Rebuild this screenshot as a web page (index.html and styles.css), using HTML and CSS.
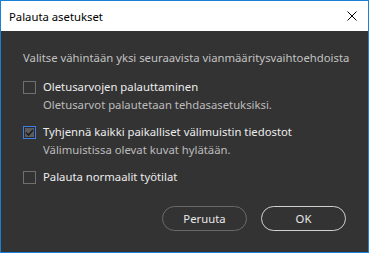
FILE: index.html
```html
<!DOCTYPE html>
<html lang="fi">
<head>
    <meta charset="UTF-8">
    <title>Palauta asetukset</title>
    <link rel="stylesheet" href="styles.css">
</head>
<body>
    <div class="dialog">
        <div class="title-bar">
            <span class="title">Palauta asetukset</span>
            <button class="close-btn" aria-label="Sulje">
                <svg width="10" height="10" viewBox="0 0 10 10">
                    <path d="M0.5 0.5 L9.5 9.5 M9.5 0.5 L0.5 9.5" stroke="#000" stroke-width="1" fill="none"/>
                </svg>
            </button>
        </div>

        <div class="content">
            <p class="intro">Valitse vähintään yksi seuraavista vianmääritysvaihtoehdoista</p>

            <div class="options">
                <label class="option">
                    <span class="box"></span>
                    <span class="texts">
                        <span class="label">Oletusarvojen palauttaminen</span>
                        <span class="desc">Oletusarvot palautetaan tehdasasetuksiksi.</span>
                    </span>
                </label>
                <label class="option">
                    <span class="box checked">
                        <svg width="9" height="7" viewBox="0 0 9 7">
                            <path d="M1 3.5 L3.5 6 L8 1" stroke="#1b1b1b" stroke-width="1.6" fill="none"/>
                        </svg>
                    </span>
                    <span class="texts">
                        <span class="label">Tyhjennä kaikki paikalliset välimuistin tiedostot</span>
                        <span class="desc">Välimuistissa olevat kuvat hylätään.</span>
                    </span>
                </label>
                <label class="option">
                    <span class="box"></span>
                    <span class="texts">
                        <span class="label">Palauta normaalit työtilat</span>
                    </span>
                </label>
            </div>

            <div class="buttons">
                <button class="btn">Peruuta</button>
                <button class="btn primary">OK</button>
            </div>
        </div>
    </div>
</body>
</html>
```

FILE: styles.css
```css
* {
    box-sizing: border-box;
}

body {
    margin: 0;
    font-family: 'Noto Sans', 'Open Sans', sans-serif;
    font-size: 11.3px;
}

.dialog {
    width: 369px;
    height: 253px;
    border: 1px solid #1a7fd6;
    background: #333333;
    display: flex;
    flex-direction: column;
}

.title-bar {
    height: 30px;
    background: #ffffff;
    display: flex;
    align-items: center;
    justify-content: space-between;
    padding: 0 11px 0 8px;
}

.title {
    color: #000000;
    font-size: 11.3px;
}

.close-btn {
    background: none;
    border: none;
    padding: 0;
    width: 10px;
    height: 10px;
    display: flex;
}

.content {
    flex: 1;
    padding: 18px 22px 0 22px;
    display: flex;
    flex-direction: column;
}

.intro {
    margin: 0;
    line-height: 18px;
    color: #c2c2c2;
    white-space: nowrap;
}

.options {
    margin-top: 11px;
    display: flex;
    flex-direction: column;
    gap: 9px;
}

.option {
    display: flex;
    gap: 7px;
    line-height: 18px;
}

.box {
    width: 13px;
    height: 13px;
    margin-top: 3px;
    border: 1px solid #6f6f6f;
    flex-shrink: 0;
    display: flex;
    align-items: center;
    justify-content: center;
}

.box.checked {
    border-color: #3d7ee8;
    background: #5c5c5c;
    box-shadow: inset 0 0 0 1px #2a2a2a;
}

.texts {
    display: flex;
    flex-direction: column;
}

.label {
    color: #ececec;
}

.desc {
    color: #bcbcbc;
}

.buttons {
    margin-top: 20px;
    display: flex;
    justify-content: flex-end;
    gap: 14px;
}

.btn {
    width: 85px;
    height: 25px;
    border-radius: 13px;
    border: 1px solid #6a6a6a;
    background: #333333;
    color: #e8e8e8;
    font-family: 'Noto Sans', 'Open Sans', sans-serif;
    font-size: 11.3px;
    padding: 0;
}

.btn.primary {
    border-color: #d0d0d0;
}
```
